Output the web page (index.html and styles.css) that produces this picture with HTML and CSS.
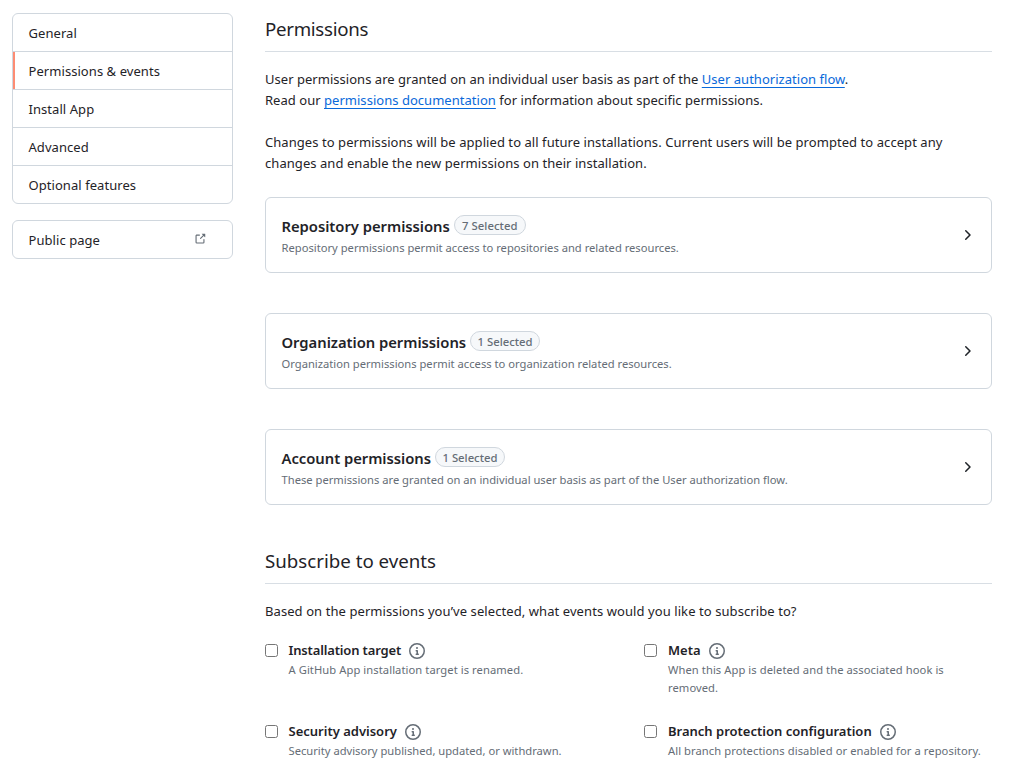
FILE: index.html
```html
<!DOCTYPE html>
<html lang="en">
<head>
<meta charset="utf-8">
<title>Permissions &amp; events</title>
<link rel="stylesheet" href="styles.css">
</head>
<body>
<svg class="sprite" aria-hidden="true">
  <symbol id="info" viewBox="0 0 16 16"><path d="M0 8a8 8 0 1 1 16 0A8 8 0 0 1 0 8Zm8-6.5a6.5 6.5 0 1 0 0 13 6.5 6.5 0 0 0 0-13ZM6.5 7.75A.75.75 0 0 1 7.25 7h1a.75.75 0 0 1 .75.75v2.75h.25a.75.75 0 0 1 0 1.5h-2a.75.75 0 0 1 0-1.5h.25v-2h-.25a.75.75 0 0 1-.75-.75ZM8 6a1 1 0 1 1 0-2 1 1 0 0 1 0 2Z"/></symbol>
  <symbol id="chevron" viewBox="0 0 16 16"><path d="M6.22 3.22a.75.75 0 0 1 1.06 0l4.25 4.25a.75.75 0 0 1 0 1.06l-4.25 4.25a.751.751 0 0 1-1.042-.018.751.751 0 0 1-.018-1.042L9.94 8 6.22 4.28a.75.75 0 0 1 0-1.06Z"/></symbol>
  <symbol id="external" viewBox="0 0 16 16"><path d="M3.75 2h3.5a.75.75 0 0 1 0 1.5h-3.5a.25.25 0 0 0-.25.25v8.5c0 .138.112.25.25.25h8.5a.25.25 0 0 0 .25-.25v-3.5a.75.75 0 0 1 1.5 0v3.5A1.75 1.75 0 0 1 12.25 14h-8.5A1.75 1.75 0 0 1 2 12.25v-8.5C2 2.784 2.784 2 3.75 2Zm6.854-1h4.146a.25.25 0 0 1 .25.25v4.146a.25.25 0 0 1-.427.177L13.03 4.03 9.28 7.78a.751.751 0 0 1-1.042-.018.751.751 0 0 1-.018-1.042l3.75-3.75-1.543-1.543A.25.25 0 0 1 10.604 1Z"/></symbol>
</svg>
<div class="layout">
  <aside class="sidebar">
    <nav class="menu">
      <a class="menu-item">General</a>
      <a class="menu-item selected">Permissions &amp; events</a>
      <a class="menu-item">Install App</a>
      <a class="menu-item">Advanced</a>
      <a class="menu-item">Optional features</a>
    </nav>
    <nav class="menu">
      <a class="menu-item">Public page <svg class="icon-external"><use href="#external"/></svg></a>
    </nav>
  </aside>
  <main class="content">
    <h2 class="heading page-heading">Permissions</h2>
    <p class="text intro">User permissions are granted on an individual user basis as part of the <a class="link">User authorization flow</a>.<br>Read our <a class="link">permissions documentation</a> for information about specific permissions.</p>
    <p class="text">Changes to permissions will be applied to all future installations. Current users will be prompted to accept any<br>changes and enable the new permissions on their installation.</p>
    <div class="cards">
      <section class="card">
        <div><div class="card-head"><h3 class="card-title">Repository permissions</h3><span class="label">7 Selected</span></div>
        <p class="note">Repository permissions permit access to repositories and related resources.</p></div>
        <svg class="icon"><use href="#chevron"/></svg>
      </section>
      <section class="card">
        <div><div class="card-head"><h3 class="card-title">Organization permissions</h3><span class="label label-narrow">1 Selected</span></div>
        <p class="note">Organization permissions permit access to organization related resources.</p></div>
        <svg class="icon"><use href="#chevron"/></svg>
      </section>
      <section class="card">
        <div><div class="card-head"><h3 class="card-title">Account permissions</h3><span class="label label-narrow">1 Selected</span></div>
        <p class="note">These permissions are granted on an individual user basis as part of the User authorization flow.</p></div>
        <svg class="icon"><use href="#chevron"/></svg>
      </section>
    </div>
    <h2 class="heading events-heading">Subscribe to events</h2>
    <p class="text question">Based on the permissions you’ve selected, what events would you like to subscribe to?</p>
    <div class="events">
      <div class="event"><input type="checkbox" class="check"><div>
        <div class="event-head"><span class="event-title tight">Installation target</span><svg class="icon info"><use href="#info"/></svg></div>
        <p class="note">A GitHub App installation target is renamed.</p></div></div>
      <div class="event right"><input type="checkbox" class="check"><div>
        <div class="event-head"><span class="event-title">Meta</span><svg class="icon info"><use href="#info"/></svg></div>
        <p class="note">When this App is deleted and the associated hook is<br>removed.</p></div></div>
      <div class="event"><input type="checkbox" class="check"><div>
        <div class="event-head"><span class="event-title">Security advisory</span><svg class="icon info"><use href="#info"/></svg></div>
        <p class="note plain">Security advisory published, updated, or withdrawn.</p></div></div>
      <div class="event right"><input type="checkbox" class="check"><div>
        <div class="event-head"><span class="event-title">Branch protection configuration</span><svg class="icon info"><use href="#info"/></svg></div>
        <p class="note">All branch protections disabled or enabled for a repository.</p></div></div>
    </div>
  </main>
</div>
</body>
</html>
```
FILE: styles.css
```css
* { box-sizing: border-box; }
html { overflow: hidden; }
body { margin: 0; background: #fff; color: #1f2328; font: 13px/21px "Noto Sans", "Open Sans", sans-serif; letter-spacing: 0.06px; white-space: nowrap; }
h2, h3, p { margin: 0; }
.sprite { display: none; }
.layout { display: grid; grid-template-columns: 221px 727px; column-gap: 32px; padding: 13px 0 0 12px; }
.sidebar { display: flex; flex-direction: column; gap: 16px; }
.menu { border: 1px solid #d0d7de; border-radius: 6px; overflow: hidden; }
.menu-item { display: flex; align-items: center; justify-content: space-between; height: 38px; padding: 2px 26px 0 15.5px; border-bottom: 1px solid #d0d7de; }
.menu-item:last-child { height: 37px; border-bottom: 0; }
.selected { box-shadow: inset 2px 0 #fd8c73; }
.icon-external { width: 12px; height: 12px; fill: #656d76; margin-bottom: 4px; }
.heading { height: 39px; border-bottom: 1px solid #d8dee4; font-size: 18.7px; line-height: 31px; font-weight: 400; letter-spacing: 0; }
.page-heading { letter-spacing: -0.3px; }
.content .heading + .text { margin-top: 17px; }
.text { margin-bottom: 21px; }
.intro { letter-spacing: 0.03px; }
.link { color: #0969da; text-decoration: underline; text-underline-offset: 3px; text-decoration-thickness: 1px; text-decoration-skip-ink: none; }
.cards { display: grid; gap: 40px; margin-top: 23px; }
.card { display: flex; justify-content: space-between; align-items: center; height: 76px; padding: 0 16px 0 15.5px; border: 1px solid #d0d7de; border-radius: 6px; }
.card .note { padding-top: 2px; }
.card-head { display: flex; align-items: center; gap: 4px; height: 24px; padding-top: 2px; }
.card-title { font-size: 14.8px; font-weight: 600; line-height: 24px; letter-spacing: -0.03px; }
.label { width: 72px; height: 20px; margin-bottom: 3px; border: 1px solid #d0d7de; border-radius: 10px; background: #f6f8fa; color: #656d76; font-size: 11.3px; line-height: 19px; font-weight: 500; text-align: center; }
.label-narrow { width: 70px; letter-spacing: 0; }
.note { color: #656d76; font-size: 11.2px; line-height: 18px; letter-spacing: 0; }
.event .note { letter-spacing: 0.07px; }
.event .plain { letter-spacing: 0; }
.icon { width: 16px; height: 16px; fill: #1f2328; }
.events-heading { margin-top: 40px; }
.question { letter-spacing: 0.08px; }
.content .question { margin-bottom: 18px; }
.events { display: grid; grid-template-columns: 379px 348px; row-gap: 24px; }
.event { display: flex; gap: 10.5px; }
.right { gap: 11px; }
.check { appearance: none; flex: none; width: 13px; height: 13px; margin: 4px 0 0; border: 1px solid #767676; border-radius: 2.5px; }
.event-head { display: flex; align-items: center; gap: 8px; height: 21px; }
.event-title { font-weight: 600; letter-spacing: 0; }
.tight { letter-spacing: -0.15px; }
.info { fill: #656d76; }
```
